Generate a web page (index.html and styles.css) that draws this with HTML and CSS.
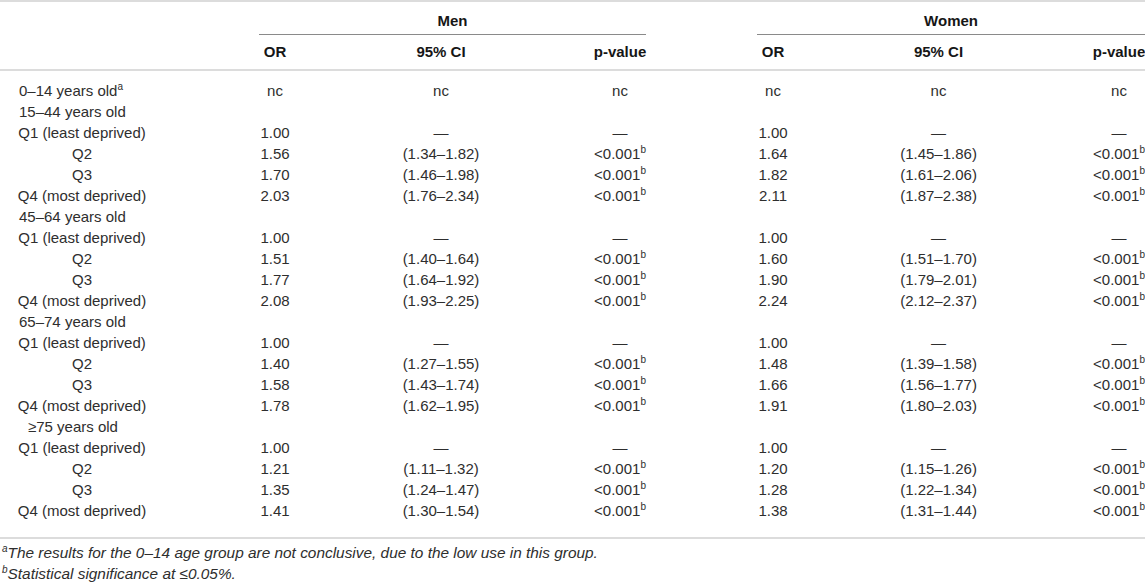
FILE: index.html
```html
<!DOCTYPE html>
<html lang="en">
<head>
    <meta charset="UTF-8">
    <meta name="viewport" content="width=device-width, initial-scale=1.0">
    <title>Odds ratios by deprivation quartile</title>
    <link rel="stylesheet" href="styles.css">
</head>
<body>
    <table class="results">
        <colgroup>
            <col class="c-label">
            <col class="c-or">
            <col class="c-ci">
            <col class="c-p">
            <col class="c-or2">
            <col class="c-ci2">
            <col class="c-p">
        </colgroup>
        <thead>
            <tr class="head-top">
                <th></th>
                <th colspan="3"><div class="group men">Men</div></th>
                <th colspan="3"><div class="group women">Women</div></th>
            </tr>
            <tr class="head-sub">
                <th></th>
                <th>OR</th>
                <th>95% CI</th>
                <th>p-value</th>
                <th>OR</th>
                <th>95% CI</th>
                <th>p-value</th>
            </tr>
        </thead>
        <tbody>
            <tr class="first">
                <td class="age">0–14 years old<sup>a</sup></td>
                <td>nc</td><td>nc</td><td>nc</td>
                <td>nc</td><td>nc</td><td>nc</td>
            </tr>
            <tr>
                <td class="age">15–44 years old</td>
                <td></td><td></td><td></td><td></td><td></td><td></td>
            </tr>
            <tr>
                <td class="q">Q1 (least deprived)</td>
                <td>1.00</td><td>—</td><td>—</td>
                <td>1.00</td><td>—</td><td>—</td>
            </tr>
            <tr>
                <td class="q">Q2</td>
                <td>1.56</td><td>(1.34–1.82)</td><td>&lt;0.001<sup>b</sup></td>
                <td>1.64</td><td>(1.45–1.86)</td><td>&lt;0.001<sup>b</sup></td>
            </tr>
            <tr>
                <td class="q">Q3</td>
                <td>1.70</td><td>(1.46–1.98)</td><td>&lt;0.001<sup>b</sup></td>
                <td>1.82</td><td>(1.61–2.06)</td><td>&lt;0.001<sup>b</sup></td>
            </tr>
            <tr>
                <td class="q">Q4 (most deprived)</td>
                <td>2.03</td><td>(1.76–2.34)</td><td>&lt;0.001<sup>b</sup></td>
                <td>2.11</td><td>(1.87–2.38)</td><td>&lt;0.001<sup>b</sup></td>
            </tr>
            <tr>
                <td class="age">45–64 years old</td>
                <td></td><td></td><td></td><td></td><td></td><td></td>
            </tr>
            <tr>
                <td class="q">Q1 (least deprived)</td>
                <td>1.00</td><td>—</td><td>—</td>
                <td>1.00</td><td>—</td><td>—</td>
            </tr>
            <tr>
                <td class="q">Q2</td>
                <td>1.51</td><td>(1.40–1.64)</td><td>&lt;0.001<sup>b</sup></td>
                <td>1.60</td><td>(1.51–1.70)</td><td>&lt;0.001<sup>b</sup></td>
            </tr>
            <tr>
                <td class="q">Q3</td>
                <td>1.77</td><td>(1.64–1.92)</td><td>&lt;0.001<sup>b</sup></td>
                <td>1.90</td><td>(1.79–2.01)</td><td>&lt;0.001<sup>b</sup></td>
            </tr>
            <tr>
                <td class="q">Q4 (most deprived)</td>
                <td>2.08</td><td>(1.93–2.25)</td><td>&lt;0.001<sup>b</sup></td>
                <td>2.24</td><td>(2.12–2.37)</td><td>&lt;0.001<sup>b</sup></td>
            </tr>
            <tr>
                <td class="age">65–74 years old</td>
                <td></td><td></td><td></td><td></td><td></td><td></td>
            </tr>
            <tr>
                <td class="q">Q1 (least deprived)</td>
                <td>1.00</td><td>—</td><td>—</td>
                <td>1.00</td><td>—</td><td>—</td>
            </tr>
            <tr>
                <td class="q">Q2</td>
                <td>1.40</td><td>(1.27–1.55)</td><td>&lt;0.001<sup>b</sup></td>
                <td>1.48</td><td>(1.39–1.58)</td><td>&lt;0.001<sup>b</sup></td>
            </tr>
            <tr>
                <td class="q">Q3</td>
                <td>1.58</td><td>(1.43–1.74)</td><td>&lt;0.001<sup>b</sup></td>
                <td>1.66</td><td>(1.56–1.77)</td><td>&lt;0.001<sup>b</sup></td>
            </tr>
            <tr>
                <td class="q">Q4 (most deprived)</td>
                <td>1.78</td><td>(1.62–1.95)</td><td>&lt;0.001<sup>b</sup></td>
                <td>1.91</td><td>(1.80–2.03)</td><td>&lt;0.001<sup>b</sup></td>
            </tr>
            <tr>
                <td class="age indent">≥75 years old</td>
                <td></td><td></td><td></td><td></td><td></td><td></td>
            </tr>
            <tr>
                <td class="q">Q1 (least deprived)</td>
                <td>1.00</td><td>—</td><td>—</td>
                <td>1.00</td><td>—</td><td>—</td>
            </tr>
            <tr>
                <td class="q">Q2</td>
                <td>1.21</td><td>(1.11–1.32)</td><td>&lt;0.001<sup>b</sup></td>
                <td>1.20</td><td>(1.15–1.26)</td><td>&lt;0.001<sup>b</sup></td>
            </tr>
            <tr>
                <td class="q">Q3</td>
                <td>1.35</td><td>(1.24–1.47)</td><td>&lt;0.001<sup>b</sup></td>
                <td>1.28</td><td>(1.22–1.34)</td><td>&lt;0.001<sup>b</sup></td>
            </tr>
            <tr class="last">
                <td class="q">Q4 (most deprived)</td>
                <td>1.41</td><td>(1.30–1.54)</td><td>&lt;0.001<sup>b</sup></td>
                <td>1.38</td><td>(1.31–1.44)</td><td>&lt;0.001<sup>b</sup></td>
            </tr>
        </tbody>
    </table>
    <div class="notes">
        <p><sup>a</sup>The results for the 0–14 age group are not conclusive, due to the low use in this group.</p>
        <p><sup>b</sup>Statistical significance at ≤0.05%.</p>
    </div>
</body>
</html>
```

FILE: styles.css
```css
html, body {
    overflow: hidden;
}
body {
    margin: 0;
    padding: 0;
    background: #fff;
    color: #2e2e2e;
    font-family: "Liberation Sans", Arial, sans-serif;
    font-size: 15px;
}
.results {
    border-collapse: collapse;
    table-layout: fixed;
    width: 1203px;
    border-top: 2px solid #dcdcdc;
    border-bottom: 2px solid #dcdcdc;
}
.c-label { width: 204px; }
.c-or { width: 142px; }
.c-ci { width: 190px; }
.c-p { width: 168px; }
.c-or2 { width: 138px; }
.c-ci2 { width: 193px; }
th {
    color: #161616;
    font-weight: bold;
    text-align: center;
    line-height: 18px;
    padding: 0;
}
.head-top th {
    padding-top: 10px;
}
.group {
    padding-bottom: 4px;
    border-bottom: 1px solid #8a8a8a;
}
.men {
    margin: 0 58px 0 55px;
}
.women {
    margin: 0 58px 0 53px;
}
.head-sub th {
    padding-top: 8px;
    padding-bottom: 8px;
    border-bottom: 2px solid #dcdcdc;
}
td {
    text-align: center;
    line-height: 21px;
    padding: 0;
    white-space: nowrap;
}
td.q {
    padding-right: 40px;
}
td.age {
    text-align: left;
    padding-left: 19px;
}
td.age.indent {
    padding-left: 28px;
}
.first td {
    padding-top: 9px;
}
.last td {
    padding-bottom: 16px;
}
sup {
    font-size: 10px;
    line-height: 0;
    vertical-align: 6px;
}
.notes {
    padding: 3px 0 0 2px;
    font-style: italic;
    font-size: 15.4px;
    line-height: 21px;
}
.notes p {
    margin: 0;
}
.notes sup {
    font-size: 10px;
    vertical-align: 6px;
}
```
